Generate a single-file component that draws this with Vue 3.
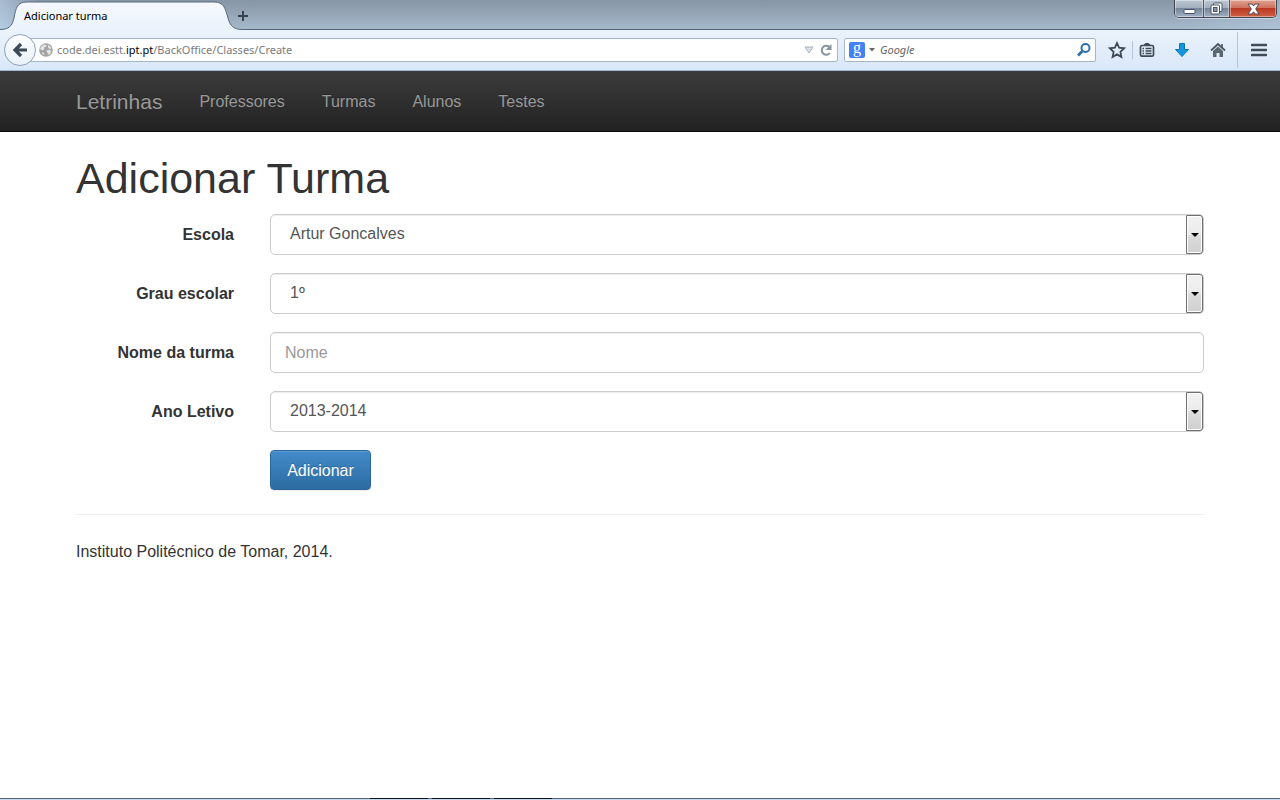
<script setup>
import { ref } from 'vue'

const links = ['Professores', 'Turmas', 'Alunos', 'Testes']
const escola = ref('Artur Goncalves')
const grau = ref('1º')
const nome = ref('')
const ano = ref('2013-2014')
const procura = ref('')
</script>

<template>
  <div class="window">
    <header class="titlebar">
      <button class="tab" type="button">
        <svg class="tab-shape" width="246" height="30" viewBox="0 0 246 30" aria-hidden="true">
          <defs>
            <linearGradient id="tabFill" x1="0" y1="0" x2="0" y2="1">
              <stop offset="0" stop-color="#f6f9fd" />
              <stop offset="1" stop-color="#eaf2fb" />
            </linearGradient>
          </defs>
          <path d="M0 30V29.500C9 29.500 12 26 14 18C16 8 17 2 27 2H214C224 2 225 8 228 18C230 26 234 29.500 242 29.500H246V30Z" fill="url(#tabFill)" />
          <path d="M0 29.500C9 29.500 12 26 14 18C16 8 17 2 27 2H214C224 2 225 8 228 18C230 26 234 29.500 242 29.500H246" fill="none" stroke="#596b80" />
        </svg>
        <span class="tab-text">Adicionar turma</span>
      </button>
      <button class="new-tab" type="button" aria-label="Novo separador">
        <svg width="12" height="12" viewBox="0 0 12 12"><path d="M6 1v10M1 6h10" stroke="#37424e" stroke-width="2" /></svg>
      </button>
      <div class="controls">
        <button type="button" class="ctl min" aria-label="Minimizar">
          <svg width="13" height="14" viewBox="0 0 13 14"><rect x="1" y="7.500" width="11" height="4" rx="1" fill="#fff" stroke="#4a5361" /></svg>
        </button>
        <button type="button" class="ctl max" aria-label="Restaurar">
          <svg width="13" height="13" viewBox="0 0 13 13">
            <rect x="3.500" y="1" width="8.500" height="8.500" rx="1" fill="#fff" stroke="#4a5361" />
            <rect x="1" y="3" width="8.500" height="9" rx="1" fill="#fff" stroke="#4a5361" />
            <rect x="3.500" y="5.500" width="3.500" height="4" fill="#8795a8" stroke="#4a5361" />
          </svg>
        </button>
        <button type="button" class="ctl close" aria-label="Fechar">
          <svg width="13" height="12" viewBox="0 0 13 12"><path d="M1 1h4l1.500 2L8 1h4L8.700 6l3.300 5H8L6.500 8.800 5 11H1l3.300-5z" fill="#fff" stroke="#5a4650" /></svg>
        </button>
      </div>
    </header>

    <div class="toolbar">
      <button class="back" type="button" aria-label="Retroceder">
        <svg width="16" height="16" viewBox="0 0 16 16"><path d="M9 2L3 8l6 6M3 8h12" fill="none" stroke="#3c4956" stroke-width="3.200" /></svg>
      </button>
      <div class="urlbar">
        <svg width="14" height="14" viewBox="0 0 14 14" aria-hidden="true">
          <circle cx="7" cy="7" r="6.800" fill="#a3a3a3" />
          <path d="M1 6C2 3.500 3.500 2 6 1.500L8 2.500 6.500 4 5 4.500 5.500 6 3.500 7.500zM9 2l2 1 1.500 2.500L11 6 9 4.500zM7.500 7.500L10 6.500l2.500 1.500-1 2.500-2 1.500L8.500 10zM3 9l2 1 .5 2L3.500 11z" fill="#e4e4e4" />
        </svg>
        <a class="address" href="#">code.dei.estt.<b>ipt.pt</b>/BackOffice/Classes/Create</a>
        <svg width="10" height="8" viewBox="0 0 10 8" aria-hidden="true"><path d="M1 1h8L5 7z" fill="#dde2e8" stroke="#a8b2bd" /></svg>
        <button class="plain" type="button" aria-label="Recarregar">
          <svg width="14" height="14" viewBox="0 0 14 14"><path d="M10.200 3.800A4.500 4.500 0 1 0 10.800 10" fill="none" stroke="#8794a1" stroke-width="2" /><path d="M12.500 1v6h-6z" fill="#8794a1" /></svg>
        </button>
      </div>
      <div class="searchbar">
        <span class="engine">g</span>
        <svg width="6" height="4" viewBox="0 0 6 4" aria-hidden="true"><path d="M0 0h6L3 3.500z" fill="#666" /></svg>
        <input v-model="procura" type="text" placeholder="Google" aria-label="Google" />
        <button class="plain" type="button" aria-label="Procurar">
          <svg width="15" height="14" viewBox="0 0 15 14"><circle cx="9.500" cy="5" r="4" fill="none" stroke="#2f70ae" stroke-width="2" /><path d="M6.500 8L2 12.500" stroke="#2f70ae" stroke-width="2.800" /></svg>
        </button>
      </div>
      <div class="tools">
        <button class="plain star" type="button" aria-label="Marcar">
          <svg width="18" height="18" viewBox="0 0 18 18"><path d="M9 2l2.100 4.700 5 .6-3.700 3.500 1 5.100L9 13.400l-4.400 2.500 1-5.100L1.900 7.300l5-.6z" fill="none" stroke="#3f4b57" stroke-width="1.800" /></svg>
        </button>
        <span class="line"></span>
        <button class="plain list" type="button" aria-label="Marcadores">
          <svg width="16" height="16" viewBox="0 0 16 16"><rect x="1.500" y="3.500" width="13" height="10.700" rx="1.500" fill="none" stroke="#3f4b57" stroke-width="1.700" /><path d="M4 3.500L6.500 1h3L12 3.500z" fill="#3f4b57" /><path d="M3.500 6.500H5M6.500 6.500h6M3.500 9H5M6.500 9h6M3.500 11.500H5M6.500 11.500h6" stroke="#3f4b57" stroke-width="1.300" /></svg>
        </button>
        <button class="plain down" type="button" aria-label="Transferências">
          <svg width="16" height="16" viewBox="0 0 16 16"><path d="M5.500 1.500h5v6h4L8 14.500 1.500 7.500h4z" fill="#1497dc" stroke="#0c76b5" /></svg>
        </button>
        <button class="plain home" type="button" aria-label="Início">
          <svg width="16" height="16" viewBox="0 0 16 16"><path d="M1 8.500L8 2l7 6.500" fill="none" stroke="#4b5662" stroke-width="1.800" /><path d="M3 9l5-4.500L13 9v6H9.500v-4h-3v4H3z" fill="#5b6671" /><path d="M12 2v4" stroke="#4b5662" stroke-width="1.600" /></svg>
        </button>
        <span class="line tall"></span>
        <button class="plain" type="button" aria-label="Menu">
          <svg width="16" height="14" viewBox="0 0 16 14"><path d="M1 2h14M1 7h14M1 12h14" stroke="#414c58" stroke-width="2.600" stroke-linecap="round" /></svg>
        </button>
      </div>
    </div>

    <nav class="navbar">
      <a class="brand" href="#">Letrinhas</a>
      <a v-for="l in links" :key="l" class="nav-link" href="#">{{ l }}</a>
    </nav>

    <main class="page">
      <h1>Adicionar Turma</h1>
      <form class="form" @submit.prevent>
        <label for="escola">Escola</label>
        <div class="field">
          <select id="escola" v-model="escola"><option>Artur Goncalves</option></select>
          <span class="arrow"></span>
        </div>
        <label for="grau">Grau escolar</label>
        <div class="field">
          <select id="grau" v-model="grau"><option>1º</option></select>
          <span class="arrow"></span>
        </div>
        <label for="nome">Nome da turma</label>
        <div class="field"><input id="nome" v-model="nome" type="text" placeholder="Nome" /></div>
        <label for="ano">Ano Letivo</label>
        <div class="field">
          <select id="ano" v-model="ano"><option>2013-2014</option></select>
          <span class="arrow"></span>
        </div>
        <div class="action"><button class="submit" type="submit">Adicionar</button></div>
      </form>
      <hr />
      <footer>Instituto Politécnico de Tomar, 2014.</footer>
    </main>

    <div class="taskbar"><span></span><span></span><span></span></div>
  </div>
</template>

<style>
html, body { background: #fff; }
</style>

<style scoped>
* { box-sizing: border-box; }
button, input, select { font: inherit; margin: 0; }
button { padding: 0; border: 0; background: none; }
a { text-decoration: none; }
svg { display: block; flex: none; }
.window {
  min-height: 100vh;
  display: flex;
  flex-direction: column;
  font: 16px/23px "Liberation Sans", Arial, sans-serif;
  color: #333;
}
.titlebar {
  height: 30px;
  display: flex;
  align-items: flex-start;
  border-bottom: 1px solid #53657a;
  background:
    linear-gradient(90deg, rgba(190, 215, 238, 0.6), transparent 3%, transparent 92%, rgba(190, 210, 230, 0.4)),
    linear-gradient(#8795a5, #a5b8cb);
  font: 11px/16px "Noto Sans", sans-serif;
}
.tab {
  position: relative;
  flex: none;
  width: 236px;
  height: 30px;
  padding: 2px 0 0 24px;
  text-align: left;
  color: #000;
}
.tab-shape { position: absolute; left: 0; top: 0; }
.tab-text { position: relative; }
.new-tab { height: 30px; padding: 2px 0 0 1px; }
.controls {
  display: flex;
  margin: 0 3px 0 auto;
  border: 1px solid #3f4853;
  border-top: 0;
  border-radius: 0 0 5px 5px;
  overflow: hidden;
  box-shadow: 0 1px 0 #cbd6e2;
}
.ctl {
  display: flex;
  align-items: center;
  justify-content: center;
  height: 17px;
  width: 28px;
  background: linear-gradient(#bcc7d3, #a4b0bf 45%, #75859a 50%, #a1b1c3);
  box-shadow: inset 0 0 0 1px rgba(255, 255, 255, 0.4);
}
.max { width: 27px; border: solid #4b5562; border-width: 0 1px; }
.close { width: 46px; background: linear-gradient(#dfa090, #cf7360 45%, #b93a22 50%, #cf6044); }
.toolbar {
  height: 41px;
  display: flex;
  align-items: center;
  padding: 0 13px 0 4px;
  border-bottom: 1px solid #9db9d0;
  background: linear-gradient(#ebf3fb, #d9e7f8);
  font: 11px/16px "Noto Sans", sans-serif;
}
.back {
  position: relative;
  z-index: 1;
  flex: none;
  display: flex;
  align-items: center;
  justify-content: center;
  width: 32px;
  height: 32px;
  border: 1px solid #8ea2b8;
  border-radius: 50%;
  background: linear-gradient(#fcfdff, #e9f1fa);
}
.urlbar, .searchbar {
  display: flex;
  align-items: center;
  height: 24px;
  border: 1px solid #a6b6c9;
  border-radius: 2px;
  background: #fff;
}
.urlbar { flex: 1; min-width: 0; gap: 4px; margin-left: -8px; padding: 0 4px 0 10px; }
.address { flex: 1; color: #7b7b7b; white-space: nowrap; overflow: hidden; }
.address b { font-weight: 400; color: #000; }
.urlbar .plain { margin-left: 1px; }
.searchbar { flex: 0 1 252px; margin-left: 6px; padding: 0 4px; }
.engine {
  width: 16px;
  height: 16px;
  margin-right: 4px;
  border-radius: 2px;
  background: #4482f4;
  color: #fff;
  font: 16px/12px "Liberation Serif", serif;
  text-align: center;
}
.searchbar input {
  flex: 1;
  min-width: 0;
  padding: 0 0 0 5px;
  border: 0;
  outline: 0;
  background: none;
  font-style: italic;
}
.searchbar input::placeholder { color: #666; opacity: 1; }
.tools { display: flex; align-items: center; margin-left: 12px; }
.line { width: 1px; height: 18px; margin: 0 6px; background: #b6c5d6; }
.tall { height: 36px; margin: 0 13px 0 11px; }
.down, .home { margin-left: 20px; }
.down { margin-left: 19px; }
.navbar {
  height: 61px;
  display: flex;
  align-items: center;
  gap: 37px;
  padding: 0 76px;
  border-bottom: 1px solid #080808;
  background: linear-gradient(#3c3c3c, #222);
}
.navbar a { color: #999; text-shadow: 0 -1px 0 rgba(0, 0, 0, 0.25); }
.navbar .brand { font-size: 21px; }
.page { flex: 1; padding: 21px 76px 0; }
h1 { margin: 0 0 11px; font-size: 43px; line-height: 50px; font-weight: 400; }
.form {
  display: grid;
  grid-template-columns: minmax(0, 2fr) minmax(0, 10fr);
  row-gap: 18px;
  margin: 0 -18px;
}
label { padding: 9px 18px 0; font-weight: 700; text-align: right; }
.field { position: relative; margin: 0 18px; }
.field select, .field input {
  display: block;
  width: 100%;
  height: 41px;
  padding: 0 14px;
  border: 1px solid #ccc;
  border-radius: 5px;
  outline: 0;
  background: #fff;
  box-shadow: inset 0 1px 1px rgba(0, 0, 0, 0.075);
  color: #555;
}
.field select { appearance: none; padding: 0 36px 3px 19px; }
.field input::placeholder { color: #999; opacity: 1; }
.arrow {
  position: absolute;
  top: 1px;
  right: 1px;
  bottom: 1px;
  width: 17px;
  border: 1px solid #707070;
  border-radius: 0 3px 3px 0;
  box-shadow: inset 0 0 0 1px #fff;
  background: linear-gradient(#f2f2f2, #ebebeb 50%, #dddddd 50%, #cfcfcf);
  pointer-events: none;
}
.arrow::after {
  content: "";
  position: absolute;
  left: 4px;
  top: 17px;
  border: solid transparent;
  border-width: 4px 4px 0;
  border-top-color: #000;
}
.action { grid-column: 2; padding: 0 18px; }
.submit {
  display: block;
  min-width: 101px;
  height: 40px;
  padding: 0 14px;
  border: 1px solid #2b669a;
  border-radius: 4px;
  background: linear-gradient(#428bca, #2d6ca2);
  box-shadow: inset 0 1px 0 rgba(255, 255, 255, 0.15), 0 1px 1px rgba(0, 0, 0, 0.075);
  color: #fff;
  text-shadow: 0 -1px 0 rgba(0, 0, 0, 0.2);
}
hr { margin: 24px 0 25px; border: 0; border-top: 1px solid #eee; }
.taskbar {
  display: flex;
  gap: 4px;
  height: 2px;
  padding-left: 370px;
  background: linear-gradient(#53657a 50%, #c5daf0 50%);
}
.taskbar span { width: 58px; height: 1px; background: #111; }
</style>
